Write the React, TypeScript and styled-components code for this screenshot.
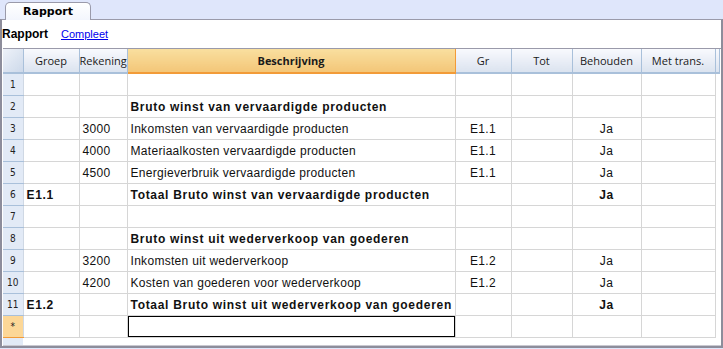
import React from "react";
import styled, { createGlobalStyle } from "styled-components";

const GlobalStyle = createGlobalStyle`
  html, body {
    margin: 0;
    padding: 0;
    background: #ffffff;
  }
  body {
    width: 723px;
    height: 349px;
    overflow: hidden;
    font-family: "Liberation Sans", Arial, sans-serif;
  }
`;

export const Screen = styled.div`
  width: 723px;
  height: 349px;
  display: flex;
  flex-direction: column;
  background: #dfe6fb;
`;

export const TabBar = styled.div`
  height: 19px;
  display: flex;
  align-items: flex-end;
  padding-left: 5px;
`;

export const Tab = styled.div`
  width: 84px;
  height: 17px;
  border: 1px solid #9a9aaa;
  border-bottom: none;
  border-radius: 5px 5px 0 0;
  background: linear-gradient(#ffffff, #f3f6fd);
  font-family: "DejaVu Sans", Verdana, sans-serif;
  font-weight: bold;
  font-size: 11px;
  display: flex;
  align-items: center;
  justify-content: center;
  margin-bottom: -1px;
  position: relative;
  z-index: 1;
`;

export const Panel = styled.div`
  flex: 1;
  border: 2px solid #8d8d9b;
  border-top: 1px solid #9a9aaa;
  background: #ffffff;
  display: flex;
  flex-direction: column;
  margin-bottom: 1px;
`;

export const Toolbar = styled.div`
  height: 28px;
  display: flex;
  align-items: center;
  gap: 13px;
  font-size: 12px;
`;

export const ToolbarTitle = styled.span`
  font-family: "Liberation Sans", Arial, sans-serif;
  font-weight: bold;
  font-size: 12px;
`;

export const ToolbarLink = styled.a`
  color: #0000ee;
  text-decoration: underline;
  cursor: pointer;
  font-family: "Liberation Sans", Arial, sans-serif;
  font-size: 11px;
`;

export const GridArea = styled.div`
  flex: 1;
  margin-left: 1px;
  border-top: 1px solid #9a9aaa;
  border-bottom: 1px solid #c8c8d0;
  display: flex;
  flex-direction: column;
  background: linear-gradient(to right, #e2eaf6 0, #e2eaf6 20px, #ffffff 20px);
`;

export const Table = styled.table`
  border-collapse: collapse;
  table-layout: fixed;
  width: 717px;
`;

export const HeadCell = styled.th<{ $active?: boolean }>`
  height: 23px;
  padding: 0;
  font-family: "Open Sans", "Noto Sans", sans-serif;
  font-size: 11px;
  font-weight: ${(p) => (p.$active ? "bold" : "normal")};
  color: #1a1a1a;
  text-align: center;
  white-space: nowrap;
  overflow: hidden;
  background: ${(p) =>
    p.$active
      ? "linear-gradient(#f9df9f, #f3c678)"
      : "linear-gradient(#f8f9fd, #dbe3ef)"};
  border-right: 1px solid ${(p) => (p.$active ? "#f29b38" : "#a9c0da")};
  border-bottom: 2px solid ${(p) => (p.$active ? "#f29b38" : "#a9c0da")};
`;

export const CornerCell = styled(HeadCell)`
  background: linear-gradient(135deg, #eef2f9, #cdd9ea);
`;

export const RowNum = styled.td<{ $new?: boolean }>`
  height: 21px;
  padding: 0;
  text-align: center;
  font-family: "DejaVu Sans Condensed", "Liberation Sans", sans-serif;
  font-size: 10px;
  color: #222;
  background: ${(p) => (p.$new ? "#fcd797" : "#e2eaf6")};
  border-right: 1px solid #cfd8e4;
  border-bottom: 1px solid ${(p) => (p.$new ? "#f29b38" : "#a9c0da")};
`;

export const Cell = styled.td<{
  $bold?: boolean;
  $center?: boolean;
  $selected?: boolean;
}>`
  height: 21px;
  padding: 0 3px;
  font-family: "Liberation Sans", Arial, sans-serif;
  font-size: 12px;
  font-weight: ${(p) => (p.$bold ? "bold" : "normal")};
  letter-spacing: ${(p) => (p.$bold ? "0.7px" : "0.3px")};
  color: #111;
  text-align: ${(p) => (p.$center ? "center" : "left")};
  white-space: nowrap;
  overflow: hidden;
  border-right: 1px solid #d6d6d6;
  border-bottom: 1px solid #d6d6d6;
  background: #ffffff;
  box-shadow: ${(p) => (p.$selected ? "inset 0 0 0 1px #000" : "none")};
`;

export const FillerCell = styled.td`
  padding: 0;
  background: #ffffff;
`;

export const HeadFiller = styled.th`
  padding: 0;
  background: linear-gradient(#f8f9fd, #dbe3ef);
  border-bottom: 2px solid #a9c0da;
  border-right: 1px solid #a9c0da;
`;

type Row = {
  groep?: string;
  rek?: string;
  desc?: string;
  gr?: string;
  beh?: string;
  bold?: boolean;
};

const rows: Row[] = [
  {},
  { desc: "Bruto winst van vervaardigde producten", bold: true },
  { rek: "3000", desc: "Inkomsten van vervaardigde producten", gr: "E1.1", beh: "Ja" },
  { rek: "4000", desc: "Materiaalkosten vervaardigde producten", gr: "E1.1", beh: "Ja" },
  { rek: "4500", desc: "Energieverbruik vervaardigde producten", gr: "E1.1", beh: "Ja" },
  { groep: "E1.1", desc: "Totaal Bruto winst van vervaardigde producten", beh: "Ja", bold: true },
  {},
  { desc: "Bruto winst uit wederverkoop van goederen", bold: true },
  { rek: "3200", desc: "Inkomsten uit wederverkoop", gr: "E1.2", beh: "Ja" },
  { rek: "4200", desc: "Kosten van goederen voor wederverkoop", gr: "E1.2", beh: "Ja" },
  { groep: "E1.2", desc: "Totaal Bruto winst uit wederverkoop van goederen", beh: "Ja", bold: true },
];

const widths = [20, 56, 48, 328, 56, 61, 69, 74];

const App: React.FC = () => {
  return (
    <>
      <GlobalStyle />
      <Screen>
        <TabBar>
          <Tab>Rapport</Tab>
        </TabBar>
        <Panel>
          <Toolbar>
            <ToolbarTitle>Rapport</ToolbarTitle>
            <ToolbarLink>Compleet</ToolbarLink>
          </Toolbar>
          <GridArea>
            <Table>
              <colgroup>
                {widths.map((w, i) => (
                  <col key={i} style={{ width: w }} />
                ))}
                <col />
              </colgroup>
              <thead>
                <tr>
                  <CornerCell />
                  <HeadCell>Groep</HeadCell>
                  <HeadCell>Rekening</HeadCell>
                  <HeadCell $active>Beschrijving</HeadCell>
                  <HeadCell>Gr</HeadCell>
                  <HeadCell>Tot</HeadCell>
                  <HeadCell>Behouden</HeadCell>
                  <HeadCell>Met trans.</HeadCell>
                  <HeadFiller />
                </tr>
              </thead>
              <tbody>
                {rows.map((r, i) => (
                  <tr key={i}>
                    <RowNum>{i + 1}</RowNum>
                    <Cell $bold={r.bold}>{r.groep}</Cell>
                    <Cell>{r.rek}</Cell>
                    <Cell $bold={r.bold}>{r.desc}</Cell>
                    <Cell $center>{r.gr}</Cell>
                    <Cell $center />
                    <Cell $center $bold={r.bold}>{r.beh}</Cell>
                    <Cell />
                    <FillerCell />
                  </tr>
                ))}
                <tr>
                  <RowNum $new>*</RowNum>
                  <Cell />
                  <Cell />
                  <Cell $selected />
                  <Cell />
                  <Cell />
                  <Cell />
                  <Cell />
                  <FillerCell />
                </tr>
              </tbody>
            </Table>
          </GridArea>
        </Panel>
      </Screen>
    </>
  );
};

export default App;
